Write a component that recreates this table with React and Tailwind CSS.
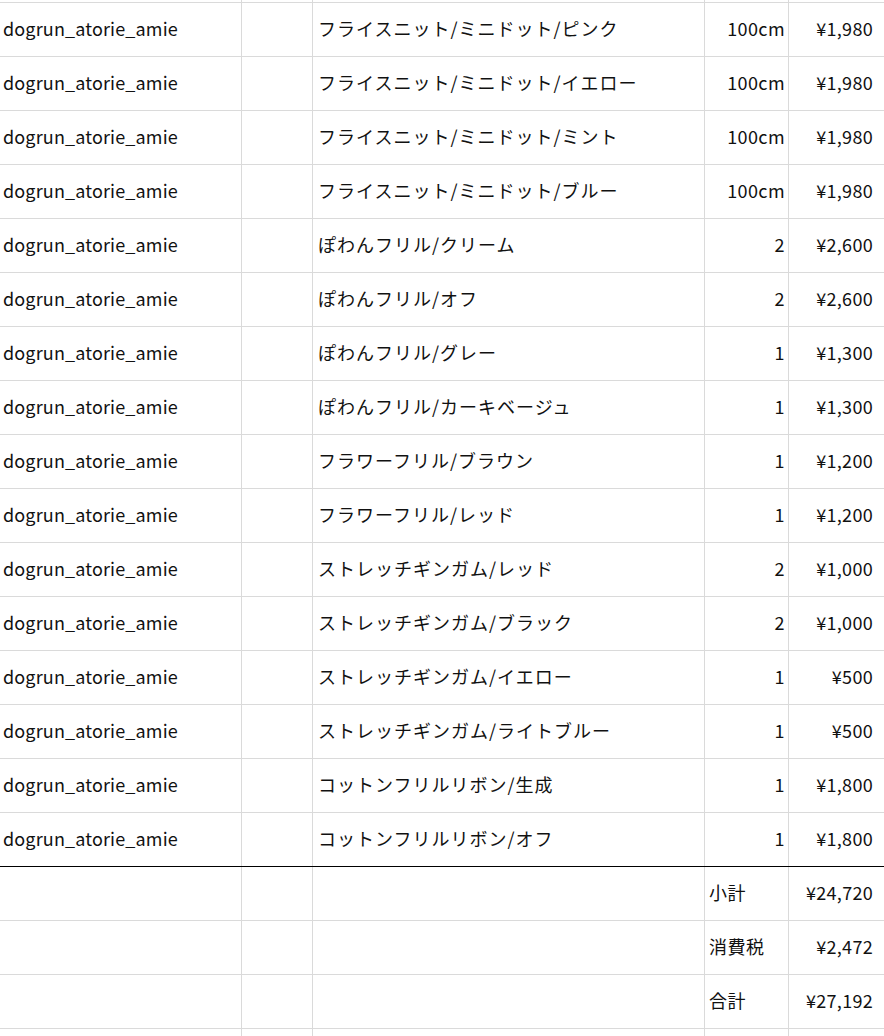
import React from 'react';

const items = [
  ['フライスニット/ミニドット/ピンク', '100cm', '¥1,980'],
  ['フライスニット/ミニドット/イエロー', '100cm', '¥1,980'],
  ['フライスニット/ミニドット/ミント', '100cm', '¥1,980'],
  ['フライスニット/ミニドット/ブルー', '100cm', '¥1,980'],
  ['ぽわんフリル/クリーム', '2', '¥2,600'],
  ['ぽわんフリル/オフ', '2', '¥2,600'],
  ['ぽわんフリル/グレー', '1', '¥1,300'],
  ['ぽわんフリル/カーキベージュ', '1', '¥1,300'],
  ['フラワーフリル/ブラウン', '1', '¥1,200'],
  ['フラワーフリル/レッド', '1', '¥1,200'],
  ['ストレッチギンガム/レッド', '2', '¥1,000'],
  ['ストレッチギンガム/ブラック', '2', '¥1,000'],
  ['ストレッチギンガム/イエロー', '1', '¥500'],
  ['ストレッチギンガム/ライトブルー', '1', '¥500'],
  ['コットンフリルリボン/生成', '1', '¥1,800'],
  ['コットンフリルリボン/オフ', '1', '¥1,800'],
];

const totals = [
  ['小計', '¥24,720'],
  ['消費税', '¥2,472'],
  ['合計', '¥27,192'],
];

const cols = 'grid grid-cols-[242px_71px_392px_84px_1fr]';
const cell = 'border-r border-[#dadada] flex items-center overflow-hidden whitespace-nowrap pb-[2px]';

const Row = ({ shop, name, qty, price, label, h = 'h-[54px]', line = 'border-b border-[#dadada]' }) => (
  <div className={`${cols} ${h} ${line}`}>
    <div className={`${cell} pl-[3px] tracking-[0.15px]`}>{shop}</div>
    <div className={cell}></div>
    <div className={`${cell} pl-[5px] tracking-[1px]`}>{name}</div>
    <div className={`${cell} ${label ? 'justify-start pl-[4px] tracking-[0.5px]' : 'justify-end pr-[3px] tracking-[0.4px]'}`}>{label || qty}</div>
    <div className="flex items-center justify-end pr-[11px] pb-[2px] whitespace-nowrap tracking-[0.3px]">{price}</div>
  </div>
);

export default function App() {
  return (
    <div
      className="w-[884px] h-[1036px] overflow-hidden bg-white text-[18px] text-[#111]"
      style={{ fontFamily: '"Noto Sans CJK JP", "Noto Sans", sans-serif' }}
    >
      <Row h="h-[3px]" />
      {items.map((it, i) => (
        <Row
          key={i}
          shop="dogrun_atorie_amie"
          name={it[0]}
          qty={it[1]}
          price={it[2]}
          line={i === items.length - 1 ? 'border-b border-black' : 'border-b border-[#dadada]'}
        />
      ))}
      {totals.map((t, i) => (
        <Row key={i} label={t[0]} price={t[1]} />
      ))}
      <Row h="h-[20px]" line="" />
    </div>
  );
}
